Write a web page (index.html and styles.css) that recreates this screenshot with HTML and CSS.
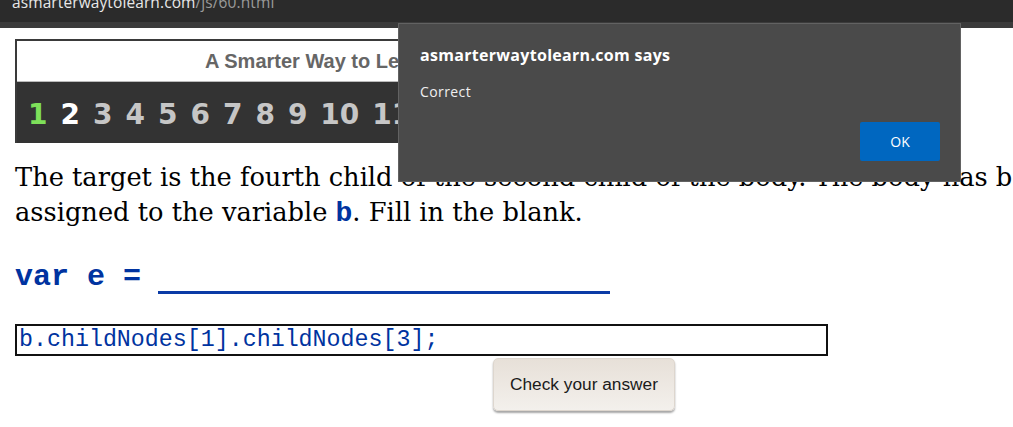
FILE: index.html
```html
<!DOCTYPE html>
<html>
<head>
<meta charset="utf-8">
<link rel="stylesheet" href="styles.css">
</head>
<body>
<div class="chrome">
  <div class="url"><span class="host">asmarterwaytolearn.com</span><span class="path">/js/60.html</span></div>
</div>
<div class="chrome-band"></div>
<main class="page">
  <div class="banner">
    <div class="banner-title">A Smarter Way to Learn JavaScript</div>
    <div class="banner-nums">
      <span class="n done">1</span><span class="n cur">2</span><span class="n">3</span><span class="n">4</span><span class="n">5</span><span class="n">6</span><span class="n">7</span><span class="n">8</span><span class="n">9</span><span class="n">10</span><span class="n">11</span><span class="n">12</span><span class="n">13</span><span class="n">14</span><span class="n">15</span>
    </div>
  </div>
  <p class="prompt">The target is the fourth child of the second child of the body. The body has been assigned to the variable <code class="kw">b</code>. Fill in the blank.</p>
  <div class="stmt"><code class="kw big">var e =</code><span class="blank"></span></div>
  <div class="answer">b.childNodes[1].childNodes[3];</div>
  <div class="btn-row"><button class="check">Check your answer</button></div>
</main>
<div class="dialog">
  <div class="dlg-title">asmarterwaytolearn.com says</div>
  <div class="dlg-msg">Correct</div>
  <div class="dlg-actions"><button class="ok">OK</button></div>
</div>
</body>
</html>
```
FILE: styles.css
```css
html, body { margin: 0; padding: 0; background: #fff; overflow: hidden; }
body { width: 1013px; height: 427px; position: relative; }
.chrome { height: 22px; background: #2b2b2b; overflow: hidden; }
.url { font-family: "Open Sans", "DejaVu Sans", sans-serif; font-size: 15.5px; line-height: 15px; margin-top: -5px; padding-left: 12px; letter-spacing: 0.1px; white-space: nowrap; }
.host { color: #e8e8e8; }
.path { color: #9a9a9a; }
.chrome-band { height: 6px; background: #3b3b3b; }
.page { padding: 11px 0 0 15px; }
.banner { width: 708px; border: 2px solid #3a3a3a; border-bottom: none; background: #fff; overflow: hidden; }
.banner-title { height: 40px; display: flex; align-items: center; justify-content: center; font-family: "Liberation Sans", Arial, sans-serif; font-weight: bold; font-size: 20px; color: #666; border-bottom: 1px solid #bbb; }
.banner-nums { height: 61px; box-sizing: border-box; background: #333; display: flex; align-items: flex-start; gap: 13px; padding: 19px 0 0 11px; white-space: nowrap; font-family: "DejaVu Sans", sans-serif; font-weight: bold; font-size: 28px; line-height: 28px; color: #c6c6c6; }
.n.done { color: #7ee05a; }
.n.cur { color: #fff; }
.prompt { margin: 17px 0 0; font-family: "DejaVu Serif", Georgia, serif; font-size: 25.7px; line-height: 35px; color: #000; width: 1060px; }
.kw { font-family: "Liberation Mono", "Courier New", monospace; font-weight: bold; color: #0033a0; font-size: 28px; line-height: 28px; }
.stmt { display: flex; align-items: flex-start; margin-top: 32px; height: 33px; }
.kw.big { display: block; font-size: 30px; line-height: 31px; }
.blank { display: block; width: 452px; height: 3px; background: #0a3ba6; margin: 29px 0 0 17px; }
.answer { margin-top: 29px; width: 807px; height: 28px; border: 2px solid #111; font-family: "Liberation Mono", "Courier New", monospace; font-size: 23.3px; line-height: 28px; color: #0033a0; padding-left: 2px; white-space: nowrap; }
.btn-row { display: flex; padding-left: 478px; margin-top: 2px; }
.check { width: 182px; height: 53px; border: 1px solid #ddd6ce; border-radius: 5px; background: linear-gradient(#e7e0d8, #f3f0ec); box-shadow: 0 2px 2px rgba(0,0,0,0.35); font-family: "Liberation Sans", Arial, sans-serif; font-size: 17.3px; color: #1a1a1a; padding: 0; }
.dialog { position: absolute; left: 398px; top: 23px; width: 561px; height: 157px; background: #4a4a4a; border: 1px solid #626262; font-family: "Open Sans", "DejaVu Sans", sans-serif; color: #fff; display: flex; flex-direction: column; }
.dlg-title { font-weight: bold; font-size: 16px; margin: 20px 0 0 21px; line-height: 22px; letter-spacing: 0.3px; }
.dlg-msg { font-size: 14px; margin: 17px 0 0 21px; line-height: 18px; color: #f0f0f0; letter-spacing: 0.4px; }
.dlg-actions { display: flex; justify-content: flex-end; margin-top: 21px; padding-right: 20px; }
.ok { width: 80px; height: 39px; background: #0067c0; color: #fff; border: none; border-radius: 2px; font-family: "Open Sans", "DejaVu Sans", sans-serif; font-size: 14px; padding: 0; }
```
